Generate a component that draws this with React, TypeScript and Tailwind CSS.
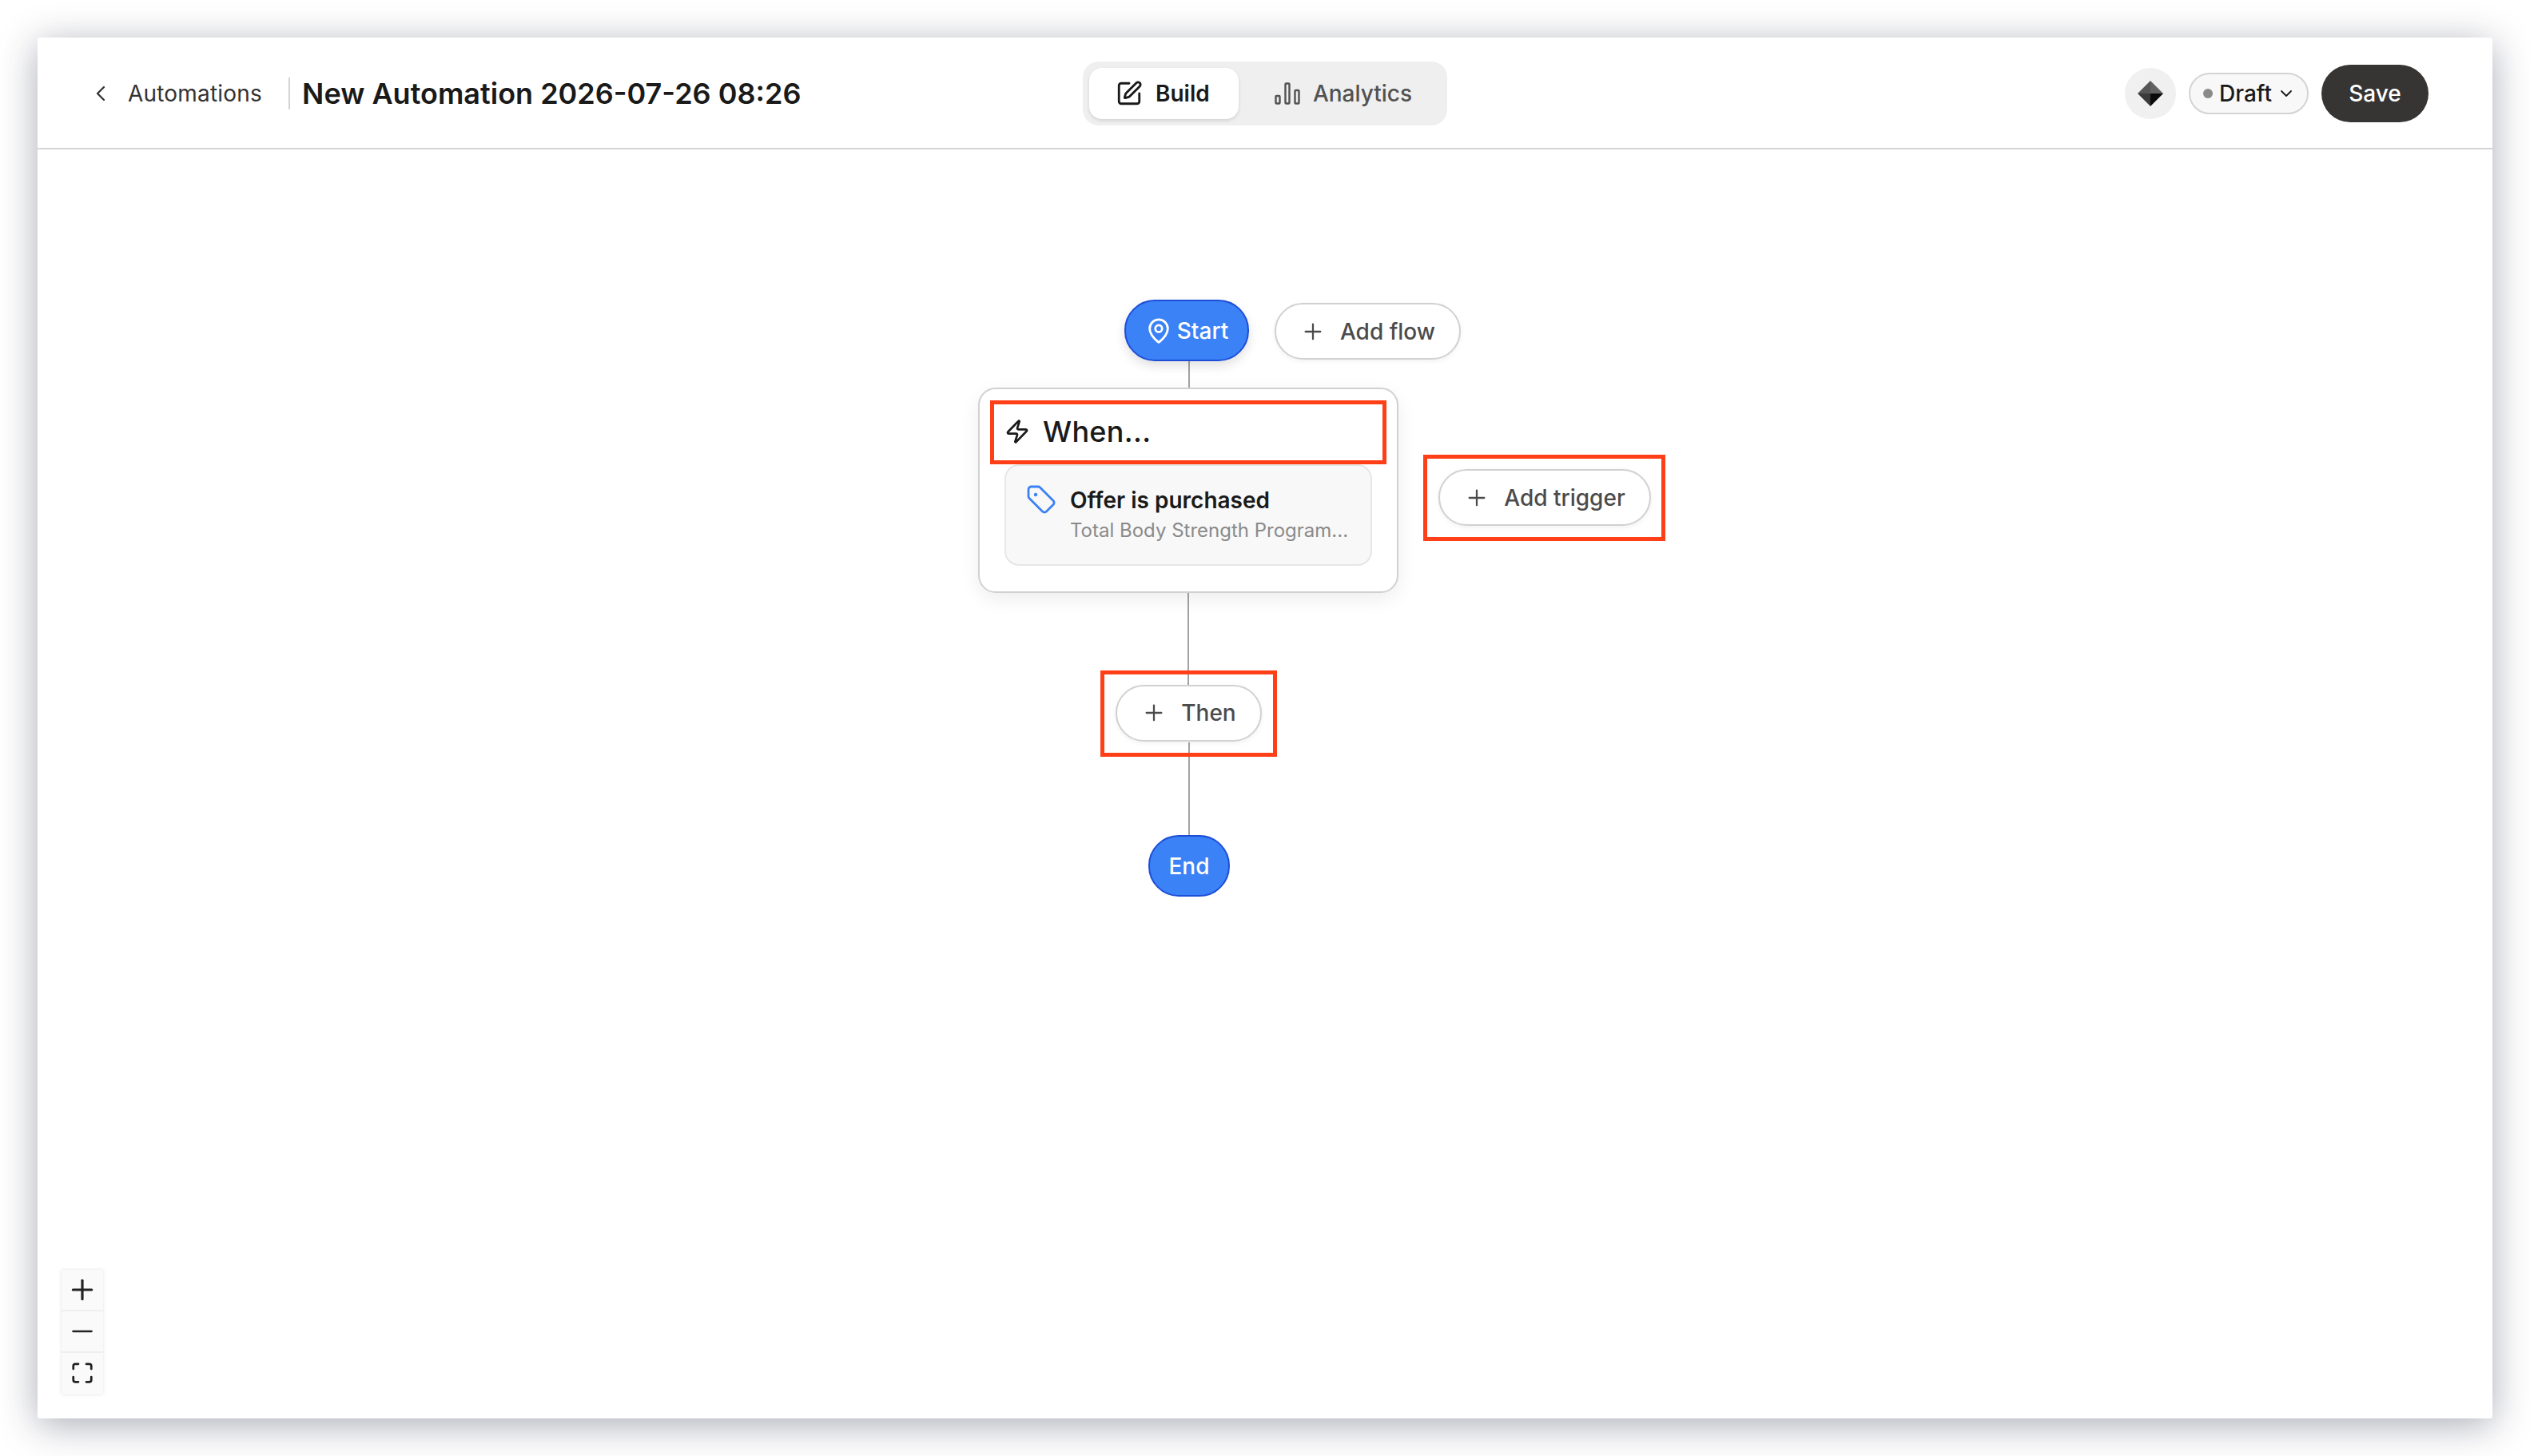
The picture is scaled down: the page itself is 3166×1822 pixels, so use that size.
import { ChevronDown, ChevronLeft, Maximize, MapPin, Minus, Plus, SquarePen, Zap } from 'lucide-react';

const font = { fontFamily: 'Inter, "Noto Sans", sans-serif' };

const AddButton = ({ label, className }: { label: string; className: string }) => (
  <button
    className={`absolute flex items-center justify-center gap-[18px] rounded-full border-2 border-[#d1d1d1] bg-white text-[28px] font-medium text-[#4b4b4b] shadow-[0_2px_6px_rgba(0,0,0,0.06)] ${className}`}
  >
    <Plus size={32} strokeWidth={1.7} />
    {label}
  </button>
);

const App = () => {
  return (
    <div className="min-h-[1822px] bg-white p-[47px]" style={font}>
      <div className="flex h-[1728px] w-[3072px] flex-col rounded-[3px] bg-white shadow-[0_8px_48px_rgba(32,36,60,0.38)]">
        <header className="grid h-[140px] shrink-0 grid-cols-[1fr_auto_1fr] items-center border-b-2 border-[#d4d4d4] pl-[79px] pr-[79px] pt-[2px]">
          <div className="flex items-center">
            <ChevronLeft size={32} strokeWidth={1.75} className="-ml-[16px] text-[#333]" />
            <span className="ml-[18px] text-[28px] tracking-[0.2px] text-[#333]">Automations</span>
            <div className="ml-[33px] h-[40px] w-[2px] bg-[#d4d4d4]" />
            <h1 className="ml-[15px] text-[36px] font-semibold text-[#1a1a1a]">New Automation 2026-07-26 08:26</h1>
          </div>
          <div className="flex h-[80px] items-center rounded-[20px] bg-[#efefef] p-[8px]">
            <div className="flex h-[64px] w-[187px] items-center justify-center gap-[16px] rounded-[16px] bg-white pr-[3px] text-[28px] font-semibold text-[#1a1a1a] shadow-[0_2px_4px_rgba(0,0,0,0.12)]">
              <SquarePen size={34} strokeWidth={2} />
              Build
            </div>
            <div className="flex h-[64px] items-center gap-[16px] pl-[45px] pr-[36px] text-[28px] font-medium text-[#525252]">
              <svg width="32" height="28" viewBox="0 0 32 28" fill="none" stroke="currentColor" strokeWidth="2.4">
                <rect x="1.5" y="17" width="5" height="9.5" rx="1" />
                <rect x="13.5" y="1.5" width="5" height="25" rx="1" />
                <rect x="25.5" y="10" width="5" height="16.5" rx="1" />
              </svg>
              Analytics
            </div>
          </div>
          <div className="mr-[1px] flex items-center justify-end">
            <div className="flex h-[64px] w-[64px] items-center justify-center rounded-full bg-[#f0f0f0]">
              <svg width="32" height="32" viewBox="0 0 32 32">
                <path d="M16 0 L0 16 L16 16 Z" fill="#555555" />
                <path d="M16 0 L32 16 L16 16 Z" fill="#626262" />
                <path d="M0 16 L16 32 L16 16 Z" fill="#3a3a3a" />
                <path d="M32 16 L16 32 L16 16 Z" fill="#0a0a0a" />
              </svg>
            </div>
            <div className="ml-[16px] flex h-[52px] w-[150px] items-center rounded-full border-2 border-[#d4d4d4] bg-[#f8f8f8] pl-[16px] text-[28px] font-medium text-[#1a1a1a]">
              <span className="mr-[8px] h-[12px] w-[12px] rounded-full bg-[#8a8a8a]" />
              Draft
              <ChevronDown size={24} strokeWidth={1.8} className="ml-[6px]" />
            </div>
            <button className="ml-[16px] h-[72px] w-[134px] rounded-full bg-[#363533] text-[28px] font-medium text-white">Save</button>
          </div>
        </header>

        <main className="relative flex-1">
          {/* diagram nodes sit on a free canvas, offsets are from the canvas corner */}
          <div className="absolute left-[1440px] top-[265px] h-[33px] w-[2px] bg-[#a3a3a3]" />
          <div className="absolute left-[1439px] top-[555px] h-[115px] w-[2px] bg-[#a3a3a3]" />
          <div className="absolute left-[1440px] top-[742px] h-[116px] w-[2px] bg-[#a3a3a3]" />

          <div className="absolute left-[1360px] top-[188px] flex h-[77px] w-[156px] items-center justify-center gap-[6px] rounded-[38px] border-2 border-[#1d4ed8] bg-[#3b82f6] text-[28px] font-medium text-white shadow-[0_6px_14px_rgba(0,0,0,0.12)]">
            <MapPin size={34} strokeWidth={2} />
            Start
          </div>
          <AddButton label="Add flow" className="left-[1548px] top-[192px] h-[71px] w-[233px]" />

          <div className="absolute left-[1177px] top-[298px] h-[257px] w-[526px] rounded-[22px] border-2 border-[#d1d1d1] bg-white px-[31px] shadow-[0_8px_24px_rgba(0,0,0,0.07)]">
            <div className="flex h-[94px] items-center gap-[16px] pt-[12px] text-[36px] font-medium tracking-[0.3px] text-[#1a1a1a]">
              <Zap size={32} strokeWidth={2} />
              When...
            </div>
            <div className="flex h-[127px] gap-[18px] rounded-[18px] border-2 border-[#e6e6e6] bg-[#f8f8f8] pl-[26px] pt-[24px]">
              <svg width="36" height="36" viewBox="0 0 36 36" fill="none" stroke="#3b82f6" strokeWidth="2.8" className="shrink-0">
                <path d="M2 5.5A3.5 3.5 0 0 1 5.5 2H14a3.5 3.5 0 0 1 2.5 1L33 19.5a3.5 3.5 0 0 1 0 5L24.5 33a3.5 3.5 0 0 1-5 0L3 16.5A3.5 3.5 0 0 1 2 14Z" />
                <circle cx="11" cy="12" r="2.2" fill="#3b82f6" stroke="none" />
              </svg>
              <div className="min-w-0">
                <div className="text-[28px] font-semibold leading-[38px] text-[#1a1a1a]">Offer is purchased</div>
                <div className="whitespace-nowrap text-[24px] leading-[38px] text-[#8a8a8a]">Total Body Strength Program...</div>
              </div>
            </div>
          </div>

          <AddButton label="Add trigger" className="left-[1753px] top-[400px] h-[71px] w-[266px]" />
          <AddButton label="Then" className="left-[1349px] top-[670px] h-[71px] w-[183px] pb-[2px]" />

          <div className="absolute left-[1390px] top-[858px] flex h-[77px] w-[102px] items-center justify-center rounded-[38px] border-2 border-[#1d4ed8] bg-[#3b82f6] text-[28px] font-medium text-white">
            End
          </div>

          {/* red annotation frames over the canvas */}
          <div className="absolute left-[1192px] top-[314px] h-[80px] w-[496px] border-[5px] border-[#ff3f17]" />
          <div className="absolute left-[1734px] top-[382px] h-[108px] w-[303px] border-[5px] border-[#ff3f17]" />
          <div className="absolute left-[1330px] top-[652px] h-[108px] w-[221px] border-[5px] border-[#ff3f17]" />

          <div className="absolute bottom-[30px] left-[30px] flex w-[52px] flex-col gap-[2px] bg-[#efefef] text-[#222] shadow-[0_0_4px_rgba(0,0,0,0.12)]">
            <div className="flex h-[50px] items-center justify-center bg-[#fafafa] pb-[1px]"><Plus size={40} strokeWidth={1.9} /></div>
            <div className="flex h-[50px] items-center justify-center bg-[#fafafa]"><Minus size={40} strokeWidth={1.4} /></div>
            <div className="flex h-[52px] items-center justify-center bg-[#fafafa] pb-[2px]"><Maximize size={30} strokeWidth={2.2} /></div>
          </div>
        </main>
      </div>
    </div>
  );
};

export default App;
